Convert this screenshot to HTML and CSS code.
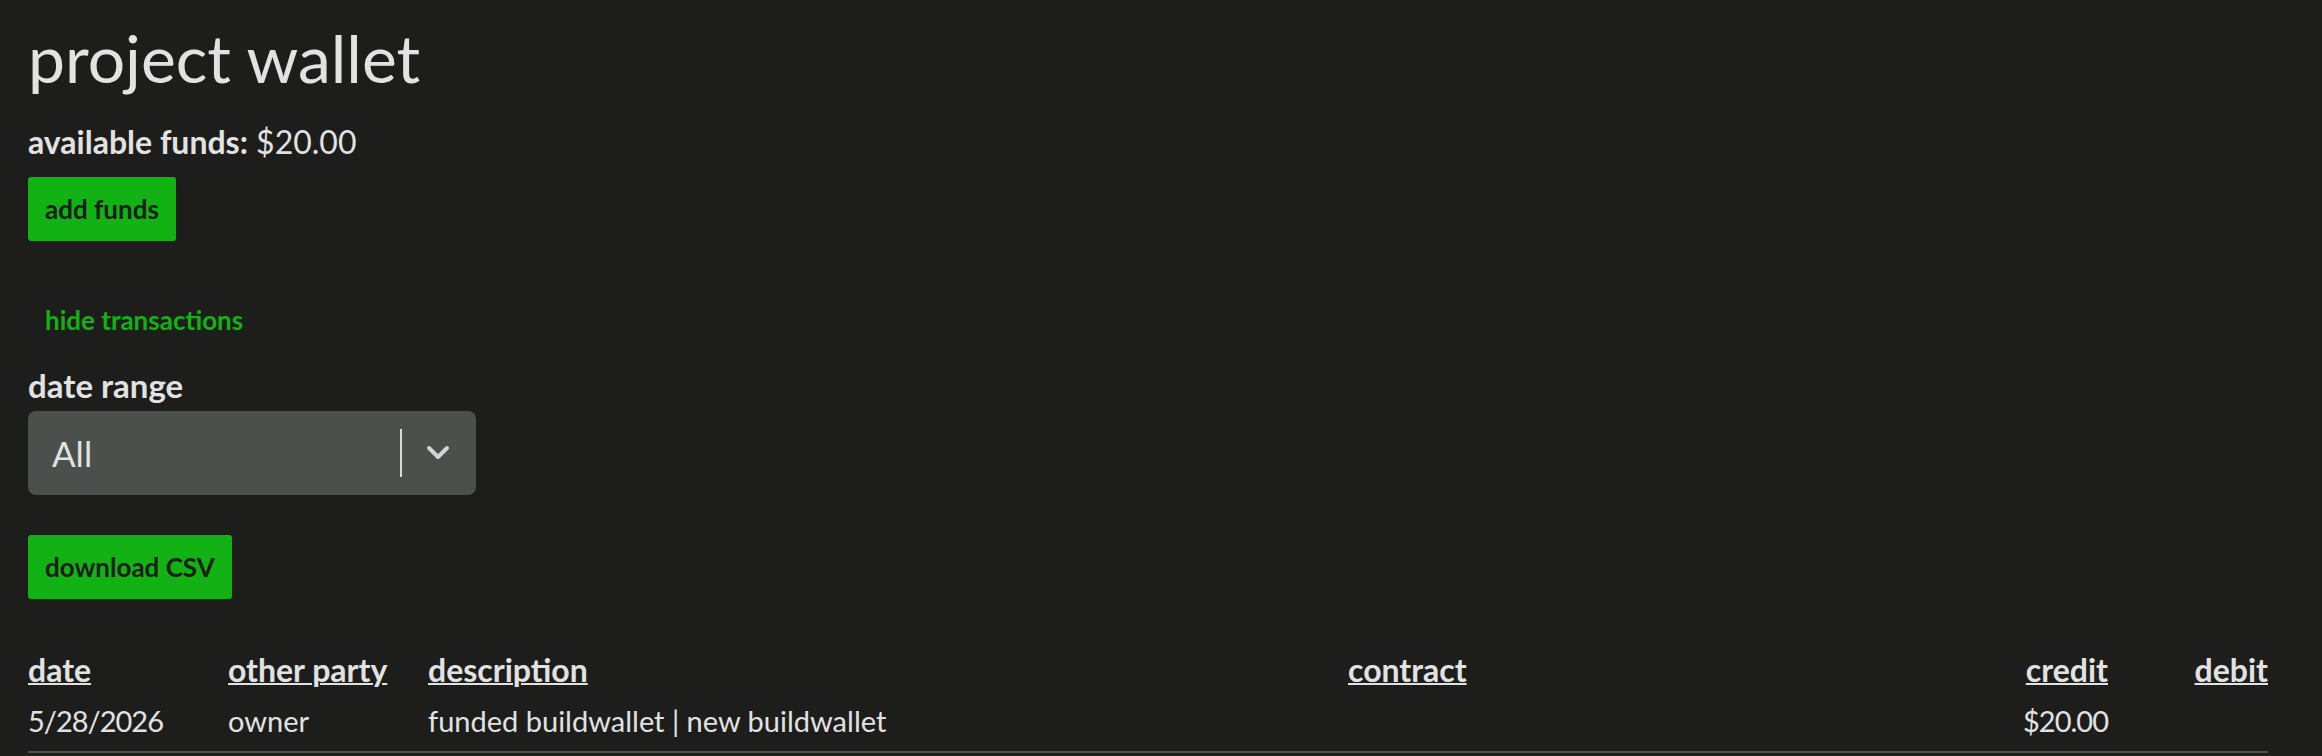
FILE: index.html
```
<!DOCTYPE html>
<html lang="en">
<head>
    <meta charset="UTF-8">
    <meta name="viewport" content="width=device-width, initial-scale=1.0">
    <title>project wallet</title>
    <link rel="stylesheet" href="styles.css">
</head>
<body>
    <main class="wallet">
        <h1 class="wallet-title">project wallet</h1>
        <p class="funds"><span class="funds-label">available funds:</span> $20.00</p>
        <button class="btn" type="button">add funds</button>

        <div class="history">
            <button class="link-btn" type="button">hide transactions</button>

            <label class="range-label" for="range">date range</label>
            <div class="range-select" id="range">
                <span class="range-value">All</span>
                <span class="range-sep"></span>
                <svg class="range-chevron" width="24" height="16" viewBox="0 0 24 16">
                    <polyline points="3,3 12,12 21,3" fill="none" stroke="currentColor" stroke-width="4" stroke-linecap="round" stroke-linejoin="round"/>
                </svg>
            </div>

            <button class="btn btn-csv" type="button">download CSV</button>

            <table class="ledger">
                <colgroup>
                    <col class="col-date">
                    <col class="col-party">
                    <col class="col-desc">
                    <col class="col-contract">
                    <col class="col-money">
                    <col class="col-money">
                </colgroup>
                <thead>
                    <tr>
                        <th>date</th>
                        <th>other party</th>
                        <th>description</th>
                        <th>contract</th>
                        <th class="num">credit</th>
                        <th class="num">debit</th>
                    </tr>
                </thead>
                <tbody>
                    <tr>
                        <td class="figure">5/28/2026</td>
                        <td>owner</td>
                        <td>funded buildwallet | new buildwallet</td>
                        <td></td>
                        <td class="num figure">$20.00</td>
                        <td class="num"></td>
                    </tr>
                </tbody>
            </table>
        </div>
    </main>
</body>
</html>
```

FILE: styles.css
```
body {
    margin: 0;
    background-color: #1d1e1c;
    color: #e2e2e2;
    font-family: Lato, "Noto Sans", sans-serif;
}
.wallet {
    padding: 0 54px 0 28px;
}
.wallet-title {
    margin: 0;
    padding-top: 18px;
    font-size: 66px;
    font-weight: 400;
    line-height: 80px;
}
.funds {
    margin: 25px 0 0 0;
    font-size: 32px;
    font-weight: 400;
    line-height: 38px;
}
.funds-label {
    font-weight: 700;
}
.btn {
    display: block;
    margin-top: 16px;
    height: 64px;
    padding: 0 17px;
    border: none;
    border-radius: 3px;
    background-color: #12b215;
    color: #1c1e1b;
    font-family: inherit;
    font-size: 26px;
    font-weight: 700;
    cursor: pointer;
}
.history {
    padding-top: 59px;
}
.link-btn {
    display: block;
    padding: 0 17px;
    border: none;
    background: none;
    color: #12b215;
    font-family: inherit;
    font-size: 26px;
    font-weight: 700;
    line-height: 40px;
    cursor: pointer;
}
.range-label {
    display: block;
    margin-top: 25px;
    font-size: 33px;
    font-weight: 700;
    line-height: 40px;
}
.range-select {
    display: flex;
    align-items: center;
    width: 448px;
    height: 84px;
    margin-top: 6px;
    border-radius: 8px;
    background-color: #4b504c;
    box-sizing: border-box;
    padding: 0 26px 0 24px;
}
.range-value {
    flex: 1;
    font-size: 35px;
    font-weight: 400;
    color: #e2e2e2;
}
.range-sep {
    width: 2px;
    height: 48px;
    background-color: #d9d9d9;
    margin-right: 24px;
}
.range-chevron {
    color: #d5d5d5;
}
.btn-csv {
    margin-top: 40px;
}
.ledger {
    width: 100%;
    margin-top: 49px;
    border-collapse: collapse;
    table-layout: fixed;
}
.col-date, .col-party {
    width: 200px;
}
.col-desc {
    width: 920px;
}
.col-money {
    width: 160px;
}
.ledger th {
    padding: 0;
    text-align: left;
    font-size: 32px;
    font-weight: 700;
    line-height: 44px;
    text-decoration: underline;
    text-decoration-thickness: 2px;
}
.ledger td {
    padding: 12px 0 13px 0;
    font-size: 29px;
    line-height: 34px;
    border-bottom: 2px solid #4a544a;
}
.ledger .num {
    text-align: right;
}
.ledger .figure {
    letter-spacing: -1px; /* lato digits run wide */
}
```
